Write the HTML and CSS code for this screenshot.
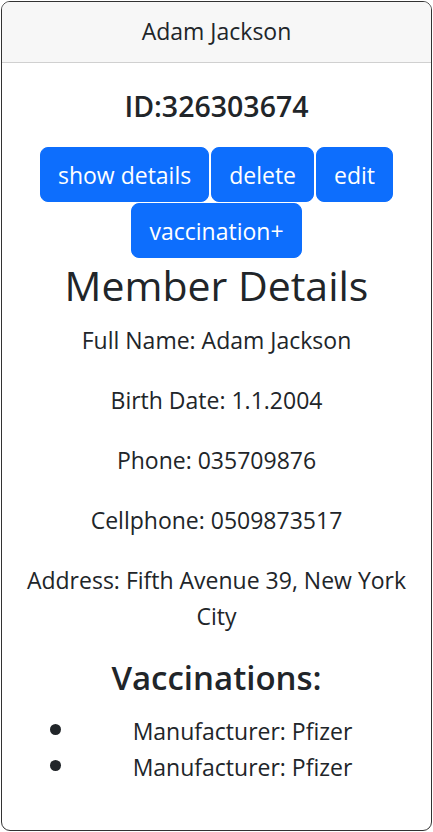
FILE: index.html
```html
<!DOCTYPE html>
<html lang="en">
<head>
<meta charset="utf-8">
<title>Member</title>
<link rel="stylesheet" href="styles.css">
</head>
<body>
<div class="card">
  <div class="card-header">Adam Jackson</div>
  <div class="card-body">
    <h4 class="member-id">ID:326303674</h4>
    <div class="actions">
      <button class="btn">show details</button>
      <button class="btn">delete</button>
      <button class="btn">edit</button>
      <button class="btn">vaccination+</button>
    </div>
    <h1 class="details-title">Member Details</h1>
    <p class="field">Full Name: Adam Jackson</p>
    <p class="field">Birth Date: 1.1.2004</p>
    <p class="field">Phone: 035709876</p>
    <p class="field">Cellphone: 0509873517</p>
    <p class="field">Address: Fifth Avenue 39, New York City</p>
    <h2 class="vacc-title">Vaccinations:</h2>
    <ul class="vacc-list">
      <li>Manufacturer: Pfizer</li>
      <li>Manufacturer: Pfizer</li>
    </ul>
  </div>
</div>
</body>
</html>
```

FILE: styles.css
```css
* { box-sizing: border-box; }
html, body { margin: 0; padding: 0; background: #fff; }
body {
  font-family: "Open Sans", "Noto Sans", sans-serif;
  color: #212529;
  padding: 1px;
}
.card {
  width: 431px;
  height: 830px;
  border: 1px solid #333;
  border-radius: 9px;
  overflow: hidden;
  text-align: center;
}
.card-header {
  background: #f7f7f7;
  border-bottom: 1px solid #d0d0d0;
  font-size: 23px;
  line-height: 33px;
  padding: 13px 16px 14px;
}
.card-body {
  padding: 26px 16px 16px;
}
.member-id {
  margin: 0;
  font-size: 28.5px;
  font-weight: 600;
  line-height: 34px;
}
.actions {
  margin-top: 24px;
  display: flex;
  flex-wrap: wrap;
  justify-content: center;
  gap: 1px 2px;
}
.btn {
  font-family: inherit;
  font-size: 23px;
  line-height: 33px;
  color: #fff;
  background: #0d6efd;
  border: 1px solid #0d6efd;
  border-radius: 8px;
  padding: 11px 17px 9px;
  margin: 0;
}
.details-title {
  margin: 3px 0 13px;
  font-size: 41px;
  font-weight: 500;
  line-height: 48px;
}
.field {
  margin: 0 0 24px;
  font-size: 23px;
  line-height: 36px;
}
.vacc-title {
  margin: 2px 0 13px;
  font-size: 33px;
  font-weight: 600;
  line-height: 40px;
}
.vacc-list {
  margin: 0;
  padding: 0 8px 0 60px;
  font-size: 23px;
  line-height: 36px;
}
.vacc-list li {
  height: 36px;
}
.vacc-list li::marker {
  font-size: 30px;
}
```
